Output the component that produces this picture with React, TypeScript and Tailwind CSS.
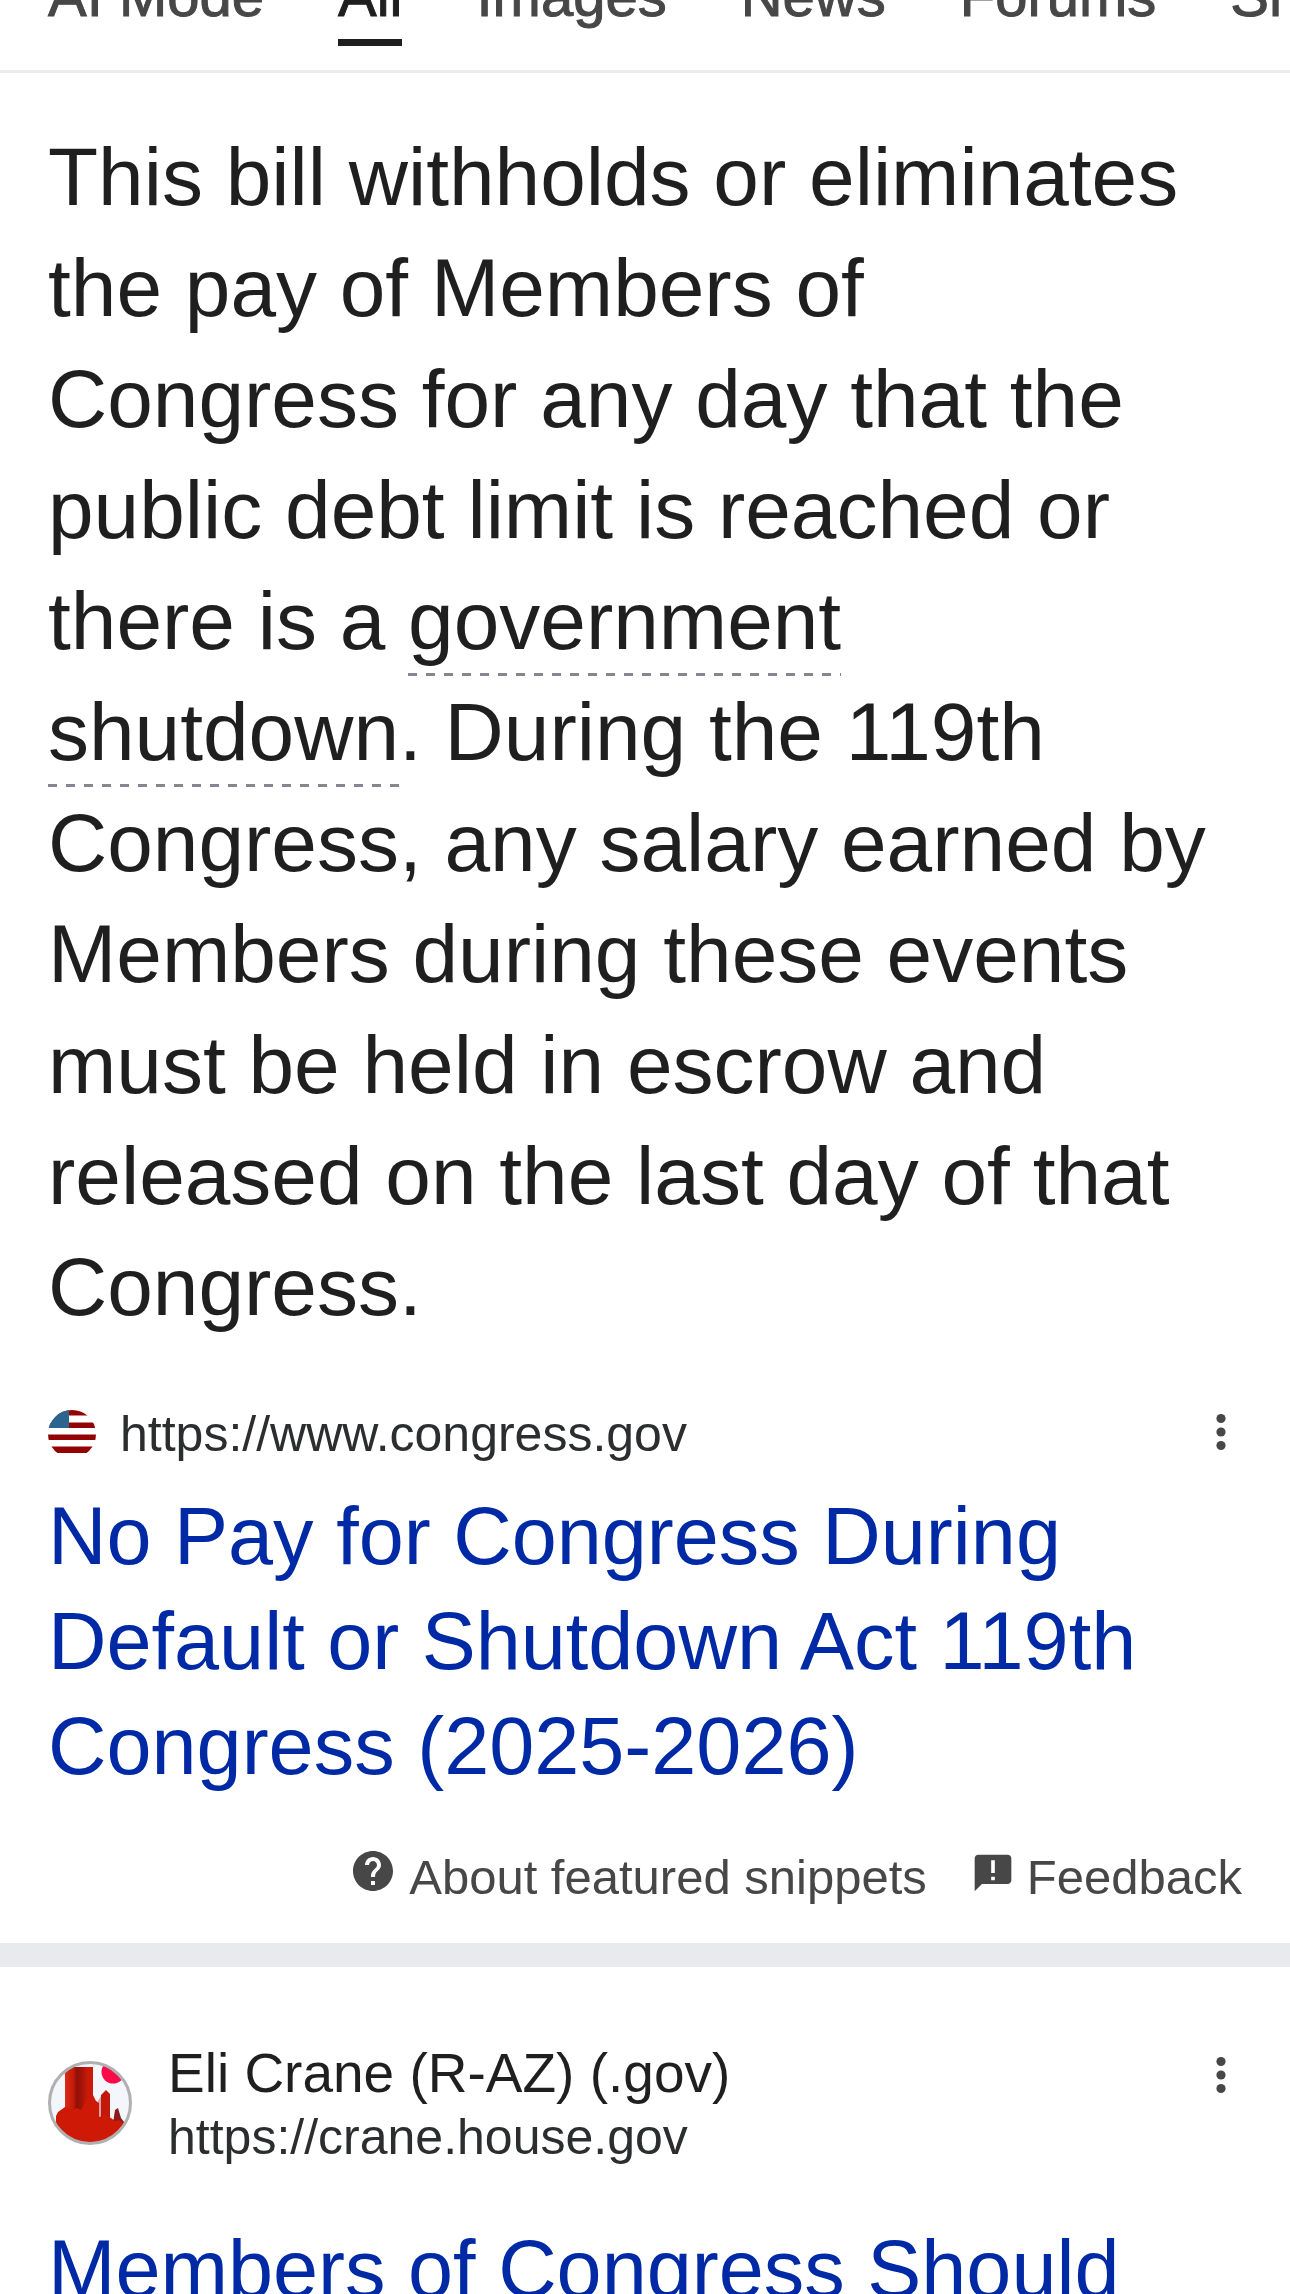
const tabs = ["AI Mode", "All", "Images", "News", "Forums", "Shopping"];

function MoreButton() {
  return (
    <button type="button" aria-label="About this result" className="shrink-0 self-start">
      <svg viewBox="0 0 42 56" className="h-14 w-[42px] fill-[#474747]">
        <circle cx="21" cy="14.5" r="4.6" />
        <circle cx="21" cy="28" r="4.6" />
        <circle cx="21" cy="41.5" r="4.6" />
      </svg>
    </button>
  );
}

function FlagIcon() {
  return (
    <svg viewBox="0 0 48 48" className="size-12 shrink-0">
      <clipPath id="flag-clip">
        <circle cx="24" cy="24" r="24" />
      </clipPath>
      <g clipPath="url(#flag-clip)">
        <path fill="#fff" d="M0 0h48v48H0z" />
        <path fill="#930303" d="M0 0h48v5.5H0zM0 12.5h48V18H0zM0 24.5h48V30H0zM0 36.5h48V43H0z" />
        <path fill="#2b648f" d="M0 0h21v18H0z" />
      </g>
    </svg>
  );
}

function CraneIcon() {
  return (
    <svg viewBox="0 0 84 84" className="size-[84px] shrink-0">
      <defs>
        <clipPath id="crane-clip">
          <circle cx="42" cy="42" r="40" />
        </clipPath>
        <linearGradient id="crane-rock">
          <stop offset="0" stopColor="#dc2a17" />
          <stop offset="0.3" stopColor="#c31a09" />
          <stop offset="0.42" stopColor="#8f1008" />
          <stop offset="0.6" stopColor="#a5130a" />
          <stop offset="0.8" stopColor="#c91a08" />
          <stop offset="1" stopColor="#c91a08" />
        </linearGradient>
      </defs>
      <g clipPath="url(#crane-clip)">
        <path fill="#f3f6fa" d="M0 0h84v84H0z" />
        <circle cx="65" cy="11" r="11.5" fill="#fb0a4a" />
        <path fill="#8c1a1a" d="M65 62l2-13 3-2 3 10 3 4v12l-11 2z" />
        <path fill="#c2190d" d="M53 34l5-5 4 4v24l5 7v18H53z" />
        <path fill="#dfa49c" d="M50 40l3-5v22h-3z" />
        <path fill="url(#crane-rock)" d="M17 7l3-1h25v30l-4 18H17z" />
        <path
          fill="#cf1907"
          d="M8 55l2-4 7-5 8 3 4-2 4 2 5-9 7-6 3 6 3 2v14l6-2 6 3 4 3 4-1 5 4 8 1v20H8z"
        />
      </g>
      <circle cx="42" cy="42" r="40.5" fill="none" stroke="#b0b0b0" strokeWidth="3" />
    </svg>
  );
}

function HelpIcon() {
  return (
    <svg viewBox="0 0 24 24" className="size-12 shrink-0 fill-[#474747]">
      <path d="M12 2C6.48 2 2 6.48 2 12s4.48 10 10 10 10-4.48 10-10S17.52 2 12 2zm1 17h-2v-2h2v2zm2.07-7.75l-.9.92C13.45 12.9 13 13.5 13 15h-2v-.5c0-1.1.45-2.1 1.17-2.83l1.24-1.26c.37-.36.59-.86.59-1.41 0-1.1-.9-2-2-2s-2 .9-2 2H8c0-2.21 1.79-4 4-4s4 1.79 4 4c0 .88-.36 1.68-.93 2.25z" />
    </svg>
  );
}

function FeedbackIcon() {
  return (
    <svg viewBox="0 0 24 24" className="mt-1 size-11 shrink-0 fill-[#474747]">
      <path d="M20 2H4c-1.1 0-2 .9-2 2v18l4-4h14c1.1 0 2-.9 2-2V4c0-1.1-.9-2-2-2zm-7 14h-2v-2h2v2zm0-4h-2V5h2v7z" />
    </svg>
  );
}

export default function App() {
  return (
    <div className="h-screen overflow-hidden bg-white font-['Liberation_Sans',Arial,sans-serif] text-[#1f1f1f]">
      {/* tabs, scrolled partly out of view */}
      <nav className="-mt-9 flex gap-[74px] overflow-hidden border-b-3 border-[#ebeded] px-12 pb-6 text-[58px] leading-[64px] [-webkit-text-stroke:1px]">
        {tabs.map((tab) => (
          <a
            key={tab}
            href="#"
            className={
              tab === "All"
                ? "shrink-0 border-b-7 border-[#1f1f1f] pb-[11px] text-[#1f1f1f]"
                : "shrink-0 border-b-7 border-transparent pb-[11px] text-[#474747]"
            }
          >
            {tab}
          </a>
        ))}
      </nav>

      <main>
        <section className="border-b-24 border-[#e8eaed] px-12 pt-12 pb-9">
          <p className="text-[82px] leading-[111px]">
            This bill withholds or eliminates
            <br />
            the pay of Members of
            <br />
            Congress for any day that the
            <br />
            public debt limit is reached or
            <br />
            there is a{" "}
            <a
              href="#"
              className="bg-[repeating-linear-gradient(90deg,#868690_0_9px,transparent_9px_18px)] bg-[length:100%_3px] bg-bottom bg-no-repeat box-decoration-clone pb-[10px]"
            >
              government
              <br />
              shutdown
            </a>
            . During the 119th
            <br />
            Congress, any salary earned by
            <br />
            Members during these events
            <br />
            must be held in escrow and
            <br />
            released on the last day of that
            <br />
            Congress.
          </p>

          <div className="mt-[62px] flex items-center">
            <FlagIcon />
            <cite className="ml-6 flex-1 text-[50px] leading-[60px] not-italic text-[#2b2d2f]">
              https://www.congress.gov
            </cite>
            <MoreButton />
          </div>
          <h3 className="mt-5 text-[81px] leading-[105px] text-[#0029a5]">
            <a href="#">No Pay for Congress During Default or Shutdown Act 119th Congress (2025-2026)</a>
          </h3>

          <div className="mt-12 flex justify-end gap-11 text-[49px] leading-[60px] text-[#474747]">
            <a href="#" className="flex items-start gap-3">
              <HelpIcon />
              About featured snippets
            </a>
            <button type="button" className="flex items-start gap-3">
              <FeedbackIcon />
              Feedback
            </button>
          </div>
        </section>

        <section className="px-12 pt-[72px]">
          <div className="flex items-center">
            <CraneIcon />
            <div className="ml-9 flex-1">
              <div className="text-[55px] leading-[68px]">Eli Crane (R-AZ) (.gov)</div>
              <cite className="block text-[50px] leading-[60px] not-italic text-[#2b2d2f]">
                https://crane.house.gov
              </cite>
            </div>
            <div className="self-start pt-2">
              <MoreButton />
            </div>
          </div>
          <h3 className="mt-[50px] text-[81px] leading-[105px] text-[#0029a5]">
            <a href="#">Members of Congress Should</a>
          </h3>
        </section>
      </main>
    </div>
  );
}
